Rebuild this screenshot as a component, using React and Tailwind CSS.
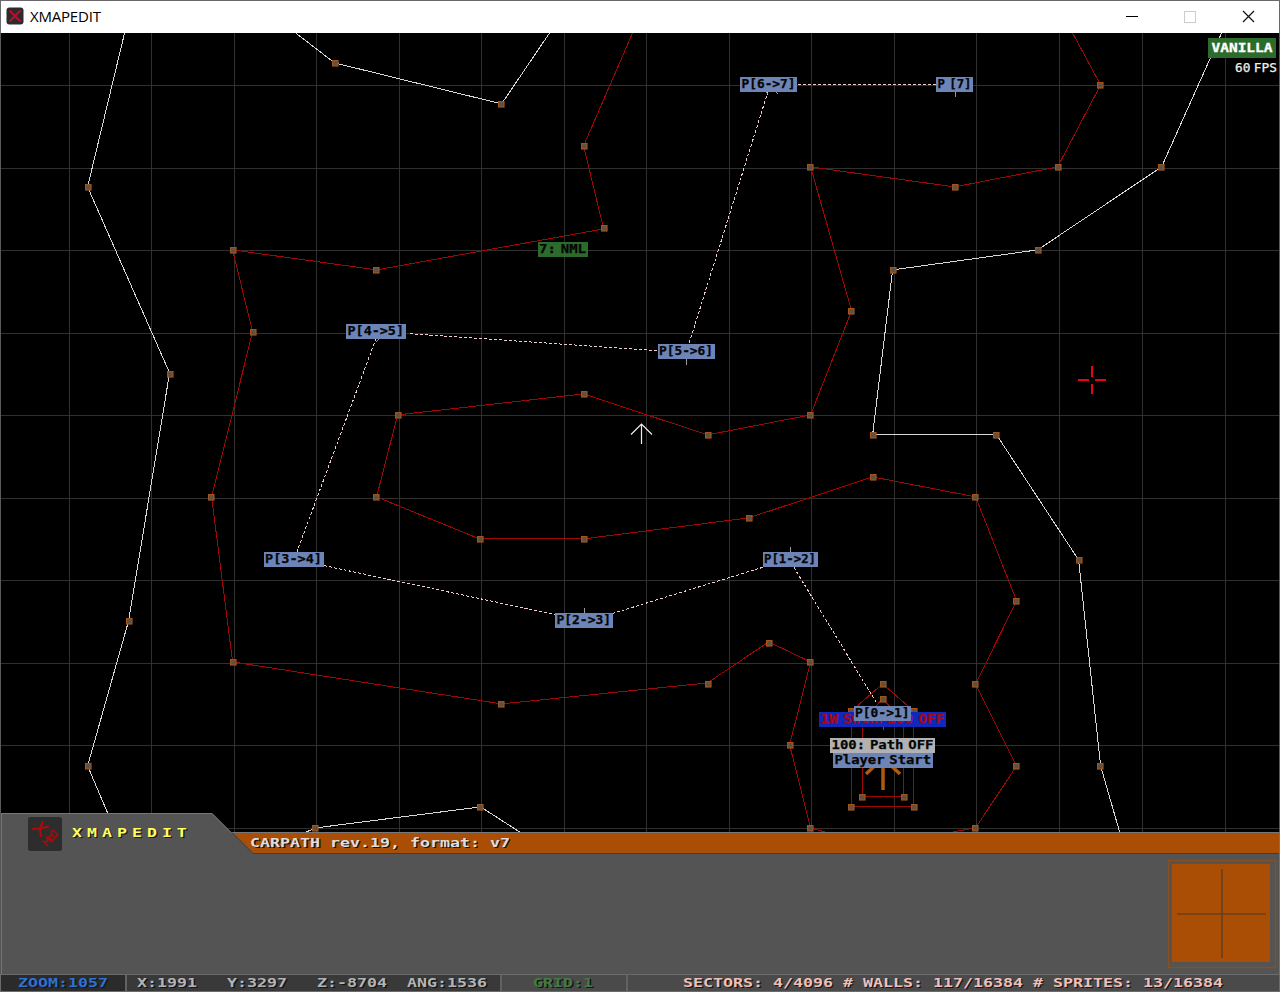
import React from "react";

const verticals = [69, 151, 234, 316, 399, 481, 564, 646, 729, 811, 894, 976, 1059, 1142, 1225];
const horizontals = [85, 168, 250, 333, 415, 498, 580, 663, 745, 828];

const whiteWalls = [
  "125,33 88,187 170,373 129,621 88,766 108,813",
  "296,33 335,63 502,104 550,33",
  "1222,33 1162,167 1038,250 893,270 873,435 997,435 1079,560 1101,766 1120,832",
  "307,832 316,828 481,807 520,832",
];

const redWalls = [
  "633,33 584,146 604,229 377,270 233,250 253,332 212,497 233,662 502,704 708,683 769,642 811,662 790,745 811,828 825,832",
  "1073,33 1101,85 1058,167 955,187 811,167 852,311 811,415 708,435 584,394 398,415 377,497 480,539 584,539 749,518 873,477 976,497 1017,601 976,684 1017,766 976,828 953,832",
  "883,684 914,711 914,807 852,807 852,711 883,684",
  "883,699 904,720 904,797 863,797 863,720 883,699",
];

const vertices = [
  [88, 187], [170, 374], [129, 621], [88, 766], [335, 63], [501, 104],
  [1161, 167], [1038, 250], [893, 270], [873, 435], [996, 435], [1079, 560], [1100, 766],
  [315, 828], [480, 807], [584, 146], [604, 228], [376, 270], [233, 250], [253, 332],
  [211, 497], [233, 662], [501, 704], [708, 684], [769, 643], [810, 662], [790, 745], [810, 828],
  [1100, 85], [1058, 167], [955, 187], [810, 167], [851, 311], [810, 415], [708, 435],
  [584, 394], [398, 415], [376, 497], [480, 539], [584, 539], [749, 518], [873, 477],
  [975, 497], [1016, 601], [975, 684], [1016, 766], [975, 828],
  [883, 684], [914, 711], [914, 807], [851, 807], [851, 711],
  [883, 699], [904, 797], [862, 797],
];

const paths = [
  "798,85 936,85",
  "768,92 689,344",
  "657,351 408,334",
  "376,339 297,552",
  "324,566 555,615",
  "612,614 765,567",
  "794,568 877,704",
];

const ticks = [
  [955.5, 91, 97], [686.5, 359, 365], [790.5, 547, 552], [584.5, 608, 613],
];

const labels = [
  { x: 740, y: 77, w: 57, t: "P[6->7]" },
  { x: 936, y: 77, w: 37, t: "P [7]" },
  { x: 657.5, y: 344, w: 57, t: "P[5->6]" },
  { x: 346, y: 324, w: 59.5, t: "P[4->5]" },
  { x: 263.5, y: 552, w: 60, t: "P[3->4]" },
  { x: 555, y: 613, w: 57.5, t: "P[2->3]" },
  { x: 762.5, y: 552, w: 55, t: "P[1->2]" },
  { x: 537.5, y: 242, w: 50, t: "7: NML", bg: "#2b6b2b" },
  { x: 819, y: 712, w: 127, t: "1W SwchP100 OFF", bg: "#1128bd", fg: "#a80814" },
  { x: 853.5, y: 706, w: 57.5, t: "P[0->1]" },
  { x: 830, y: 738, w: 105, t: "100: Path OFF", bg: "#b2b2b2" },
  { x: 833, y: 753, w: 99.5, t: "Player Start" },
];

function MapLabel({ x, y, w, t, bg = "#6c84b6", fg = "#050505" }) {
  return (
    <g>
      <rect x={x} y={y} width={w} height={15} fill={bg} />
      <text
        x={x + 1.5}
        y={y + 11}
        textLength={w - 3}
        lengthAdjust="spacingAndGlyphs"
        fill={fg}
        stroke={fg}
        strokeWidth="0.25"
        className="font-['DejaVu_Sans_Mono'] text-[12px] font-bold [word-spacing:-3px]"
      >
        {t}
      </text>
    </g>
  );
}

function MapView() {
  return (
    <svg width="1280" height="799" viewBox="0 33 1280 799" className="block bg-black" shapeRendering="crispEdges">
      <g stroke="#303030">
        {verticals.map((x) => <path key={x} d={`M${x + 0.5} 33V832`} />)}
        {horizontals.map((y) => <path key={y} d={`M0 ${y + 0.5}H1280`} />)}
      </g>
      <g fill="none" stroke="#d8d8d8">
        {whiteWalls.map((p) => <polyline key={p} points={p} transform="translate(-.4 -.1)" />)}
      </g>
      <g fill="none" stroke="#a00808">
        {redWalls.map((p) => <polyline key={p} points={p} transform="translate(-.4 -.1)" />)}
      </g>
      <g fill="none" stroke="#f0cccc" strokeDasharray="3 2">
        {paths.map((p) => <polyline key={p} points={p} transform="translate(0 -.4)" />)}
      </g>
      <g stroke="#9b9b9b">
        {ticks.map(([x, a, b]) => <path key={x} d={`M${x} ${a}V${b}`} />)}
        <path d="M376 342l4-4M768 94l-3-3M775 91l3 3" />
      </g>
      <g fill="#5c5148" stroke="#a05618" strokeWidth="1.2" shapeRendering="auto">
        {vertices.map(([x, y]) => <rect key={`${x}-${y}`} x={x - 2.4} y={y - 2.4} width="5.4" height="5.4" />)}
      </g>
      <path d="M883 790V766M883 758L866 774M883 758L900 774" fill="none" stroke="#b05a10" strokeWidth="3.5" shapeRendering="auto" />
      <path d="M883.5 725V730" stroke="#2362b8" />
      <path d="M641.5 444V424M631 434.5L641.5 424L652 434.5" fill="none" stroke="#eeeeee" shapeRendering="auto" strokeWidth="1.2" />
      <path d="M1092 366V377M1092 384V394M1078 380H1089M1095 380H1106" stroke="#ed0010" strokeWidth="2" />
      {labels.map((l) => <MapLabel key={l.t} {...l} />)}
      <rect x="1208" y="38" width="68" height="20" fill="#2b6b2b" />
      <text x="1211.5" y="51.5" textLength="61" lengthAdjust="spacingAndGlyphs" fill="#fff" stroke="#fff" strokeWidth=".3" className="font-['DejaVu_Sans_Mono'] text-[12px] font-bold">VANILLA</text>
      <text x="1235" y="72" textLength="42" lengthAdjust="spacingAndGlyphs" fill="#eee" stroke="#eee" strokeWidth=".25" className="font-['DejaVu_Sans_Mono'] text-[12px] [word-spacing:-4px]">60 FPS</text>
      <path d="M0.5 33V832M1279.5 33V832" stroke="#5a5a5a" />
    </svg>
  );
}

function Wide({ className = "", children }) {
  return (
    <span className={`block w-max origin-left scale-x-[1.384] whitespace-pre font-['DejaVu_Sans_Mono'] text-[12px] leading-none font-bold [text-shadow:1px_1px_0_#151515] ${className}`}>
      {children}
    </span>
  );
}

function TitleBar() {
  return (
    <header className="flex h-[33px] items-center border-x border-t border-[#6b686b] bg-white pb-[2px] pl-[5px]">
      <svg width="18" height="18" viewBox="0 0 18 18">
        <rect x=".5" y=".5" width="17" height="17" rx="3" fill="#2d292d" />
        <path d="M4 4L14 14M14 4L4 14" stroke="#b9102c" strokeWidth="2" strokeLinecap="round" />
      </svg>
      <span className="ml-[6px] font-['Open_Sans'] text-[15px] tracking-[-0.2px] text-black">XMAPEDIT</span>
      <svg className="ml-auto mr-[24px]" width="130" height="14" viewBox="0 0 130 14" fill="none">
        <path d="M1 7.5H13" stroke="#000" />
        <rect x="59.5" y="2.5" width="11" height="11" stroke="#ccc" />
        <path d="M118 2L129 13M129 2L118 13" stroke="#111" strokeWidth="1.2" />
      </svg>
    </header>
  );
}

function Toolbar() {
  return (
    <section className="relative -mt-[19px] h-[161px]">
      <svg width="1280" height="161" viewBox="0 813 1280 161" className="block">
        <path d="M0 813H212L253 854H1280V974H0Z" fill="#545454" />
        <path d="M232 832H1280V853H253Z" fill="#aa4e06" />
        <path d="M1 813.5H212L231 832.5H1279" fill="none" stroke="#777" />
        <path d="M232 832.5L253 853.5H1280" fill="none" stroke="#403c38" />
        <path d="M1.5 814V974M1279.5 832V974" stroke="#747474" />
        <rect x="28" y="817" width="34" height="34" rx="2.5" fill="#2d2d2d" />
        <g fill="none" stroke="#b40808">
          <path d="M32 829L40 828.5L49 826.5M43 821.5L40 828.5L41 837" strokeWidth="2" />
          <path d="M48 846L43.5 841.5L48 841.5L47 837.5L52 842M48.5 836.5L53 841M48.5 836.5Q52 834 54 837Q55 839 53 841M53 836.5L51 832.5Q51.5 830 54 830.5L57.5 834.5Q57 837 54.5 837" strokeWidth="1.3" />
        </g>
        <rect x="1168.5" y="860.5" width="107" height="107" fill="none" stroke="#8a4f20" strokeWidth="1.3" />
        <rect x="1172" y="864" width="98" height="98" fill="#aa4e06" />
        <path d="M1222 869V958M1177 914H1266" stroke="#69401d" strokeWidth="1.6" />
      </svg>
      <div className="absolute left-[72px] top-[14px]">
        <Wide className="tracking-[3.6px] text-[#ffff60]">XMAPEDIT</Wide>
      </div>
      <div className="absolute left-[250px] top-[24px]">
        <Wide className="text-[#dedede]">CARPATH rev.19, format: v7</Wide>
      </div>
    </section>
  );
}

function StatusBar() {
  return (
    <footer className="flex h-[18px] items-center border-x border-y border-[#6b6b6b] bg-[#4a4a4a]">
      <div className="flex h-full w-[126px] items-center border-r-2 border-[#626262] bg-[#2b2b2b] pl-[17px]">
        <Wide className="text-[#2e72d2]">ZOOM:1057</Wide>
      </div>
      <div className="flex h-full w-[375px] items-center border-r-2 border-[#626262] bg-[#393939] pl-[10px] text-[#b4b4b4]">
        <div className="w-[90px]"><Wide>X:1991</Wide></div>
        <div className="w-[90px]"><Wide>Y:3297</Wide></div>
        <div className="w-[90px]"><Wide>Z:-8704</Wide></div>
        <Wide>ANG:1536</Wide>
      </div>
      <div className="flex h-full w-[126px] items-center border-r-2 border-[#626262] pl-[31px]">
        <Wide className="text-[#437b43]">GRID:1</Wide>
      </div>
      <div className="flex h-full items-center pl-[55px]">
        <Wide className="text-[#f0c0b8]">SECTORS: 4/4096 # WALLS: 117/16384 # SPRITES: 13/16384</Wide>
      </div>
    </footer>
  );
}

export default function App() {
  return (
    <div className="flex h-[992px] w-[1280px] flex-col overflow-hidden bg-[#545454]">
      <TitleBar />
      <MapView />
      <Toolbar />
      <StatusBar />
    </div>
  );
}
